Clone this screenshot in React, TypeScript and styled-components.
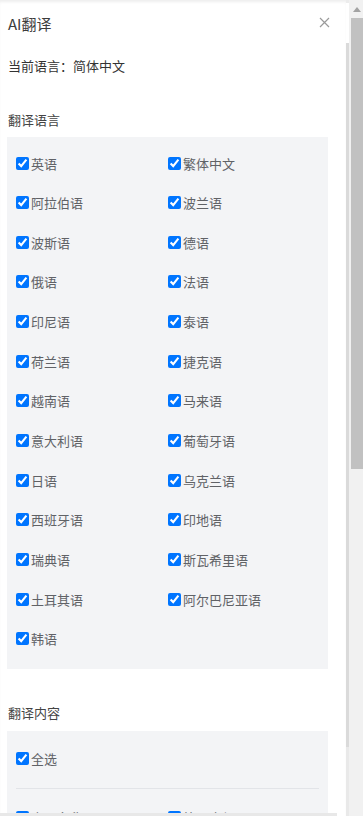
import styled, { createGlobalStyle } from "styled-components";

const GlobalStyle = createGlobalStyle`
  html, body {
    margin: 0;
    padding: 0;
    background: #ffffff;
    overflow: hidden;
  }
  body {
    font-family: "Noto Sans CJK SC", "Noto Sans", sans-serif;
  }
`;

const languages = [
  "英语",
  "繁体中文",
  "阿拉伯语",
  "波兰语",
  "波斯语",
  "德语",
  "俄语",
  "法语",
  "印尼语",
  "泰语",
  "荷兰语",
  "捷克语",
  "越南语",
  "马来语",
  "意大利语",
  "葡萄牙语",
  "日语",
  "乌克兰语",
  "西班牙语",
  "印地语",
  "瑞典语",
  "斯瓦希里语",
  "土耳其语",
  "阿尔巴尼亚语",
  "韩语",
];

const contents = ["商品名称", "简要介绍"];

const Frame = styled.div`
  display: flex;
  flex-direction: row;
  width: 363px;
  height: 816px;
  overflow: hidden;
`;

const Panel = styled.div`
  position: relative;
  width: 346px;
  height: 816px;
  overflow: hidden;
  background: #fff;
  box-shadow: inset 0 3px 3px -1px rgba(0, 0, 0, 0.07);
  padding: 0 18px 0 7px;
  box-sizing: border-box;
`;

const Header = styled.div`
  display: flex;
  flex-direction: row;
  justify-content: space-between;
  align-items: center;
  height: 45px;
  padding: 0 0 0 1px;
`;

const Title = styled.div`
  font-size: 15px;
  line-height: 20px;
  color: #3c3c3c;
  margin-top: 2px;
`;

const CloseButton = styled.div`
  display: flex;
  align-items: center;
  justify-content: center;
  width: 12px;
  height: 12px;
  margin-right: -2px;
  cursor: pointer;
`;

const CurrentLang = styled.div`
  font-size: 13px;
  line-height: 20px;
  color: #333;
  margin: 11px 0 0 1px;
`;

const SectionTitle = styled.div<{ $top: number }>`
  font-size: 13px;
  line-height: 20px;
  color: #444;
  margin: ${(p) => p.$top}px 0 0 1px;
`;

const OptionBox = styled.div<{ $top: number; $padTop: number }>`
  background: #f3f4f6;
  margin-top: ${(p) => p.$top}px;
  padding: ${(p) => p.$padTop}px 9px 19.67px 9px;
`;

const OptionGrid = styled.div`
  display: grid;
  grid-template-columns: 152px 152px;
  row-gap: 19.67px;
`;

const Option = styled.label`
  display: flex;
  flex-direction: row;
  align-items: center;
  height: 20px;
  font-size: 13px;
  color: #606266;
  white-space: nowrap;
  cursor: pointer;
`;

const Check = styled.input`
  width: 13px;
  height: 13px;
  margin: 0 2px 0 0;
  flex-shrink: 0;
`;

const Divider = styled.div`
  height: 1px;
  background: #e2e4e8;
  margin: 19px 0 19px 0;
`;

const BottomRail = styled.div`
  position: absolute;
  left: 0;
  bottom: 0;
  width: 337px;
  height: 3px;
  background: #e8e8e8;
`;

const InnerRail = styled.div`
  width: 3px;
  height: 816px;
  flex-shrink: 0;
  background: linear-gradient(
    to bottom,
    #ececec 0px,
    #ececec 3px,
    #ffffff 3px,
    #ffffff 43px,
    #dadada 43px,
    #dadada 747px,
    #e9e9e9 747px
  );
`;

const ScrollTrack = styled.div`
  display: flex;
  flex-direction: column;
  width: 14px;
  height: 816px;
  flex-shrink: 0;
  background: #f1f1f1;
  padding-left: 2px;
  box-sizing: border-box;
`;

const ScrollArrow = styled.div`
  display: flex;
  justify-content: center;
  align-items: center;
  height: 18px;
`;

const ScrollThumb = styled.div`
  height: 451px;
  background: #c1c1c1;
`;

const Checkbox = ({ label }: { label: string }) => (
  <Option>
    <Check type="checkbox" defaultChecked />
    {label}
  </Option>
);

export default function App() {
  return (
    <>
      <GlobalStyle />
      <Frame>
        <Panel>
          <Header>
            <Title>AI翻译</Title>
            <CloseButton>
              <svg width="11" height="11" viewBox="0 0 11 11">
                <path
                  d="M1 1 L10 10 M10 1 L1 10"
                  stroke="#9a9a9a"
                  strokeWidth="1.2"
                  fill="none"
                />
              </svg>
            </CloseButton>
          </Header>
          <CurrentLang>当前语言：简体中文</CurrentLang>
          <SectionTitle $top={34}>翻译语言</SectionTitle>
          <OptionBox $top={7} $padTop={16}>
            <OptionGrid>
              {languages.map((l) => (
                <Checkbox key={l} label={l} />
              ))}
            </OptionGrid>
          </OptionBox>
          <SectionTitle $top={34}>翻译内容</SectionTitle>
          <OptionBox $top={8} $padTop={18}>
            <Checkbox label="全选" />
            <Divider />
            <OptionGrid>
              {contents.map((c) => (
                <Checkbox key={c} label={c} />
              ))}
            </OptionGrid>
          </OptionBox>
          <BottomRail />
        </Panel>
        <InnerRail />
        <ScrollTrack>
          <ScrollArrow>
            <svg width="8" height="5" viewBox="0 0 8 5">
              <path d="M0 5 L4 0 L8 5 Z" fill="#a3a3a3" />
            </svg>
          </ScrollArrow>
          <ScrollThumb />
        </ScrollTrack>
      </Frame>
    </>
  );
}
